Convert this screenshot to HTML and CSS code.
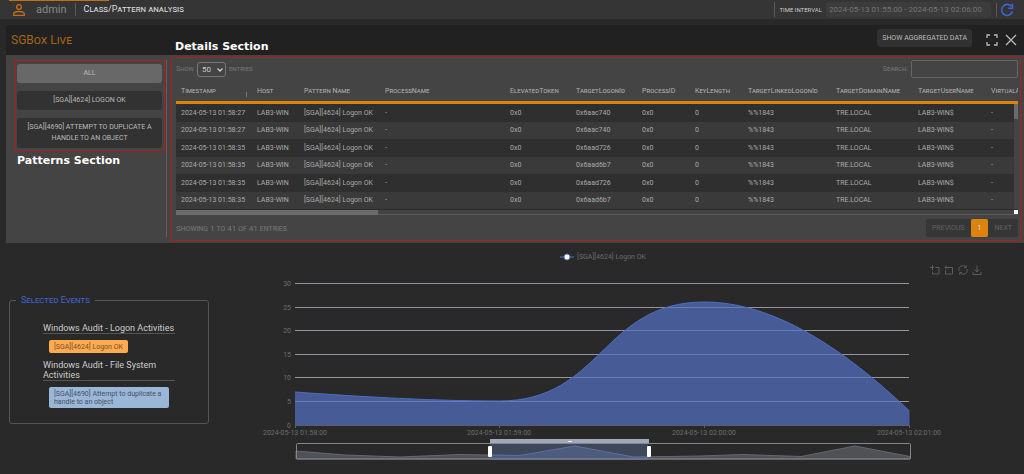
FILE: index.html
```html
<!DOCTYPE html>
<html lang="en">
<head>
    <meta charset="UTF-8">
    <meta name="viewport" content="width=device-width, initial-scale=1.0">
    <title>SGBox Live - Class/Pattern analysis</title>
    <link rel="stylesheet" href="styles.css">
</head>
<body>

    <header class="topbar">
        <svg class="user-icon" viewBox="0 0 12 12" width="12" height="12">
            <circle cx="6" cy="3" r="2.4"/>
            <path d="M.7 11.3V10C.7 8.3 3 7.5 6 7.5s5.300.8 5.300 2.500v1.300z"/>
        </svg>
        <span class="user-name">admin</span>
        <h1 class="page-title">Class/Pattern analysis</h1>
        <div class="interval">
            <label for="interval">Time interval</label>
            <input type="text" id="interval" value="2024-05-13 01:55:00 - 2024-05-13 02:06:00">
        </div>
        <button class="icon-btn refresh" aria-label="Refresh">
            <svg viewBox="0 0 14 14" width="14" height="14"><path d="M11.500 3.500A5.500 5.500 0 1 0 12.500 8.300M12.500.8v4.400H8.200"/></svg>
        </button>
    </header>

    <main>
        <section class="panel">
            <div class="panel-head">
                <h2 class="panel-title">SGBox Live</h2>
                <strong class="note">Details Section</strong>
                <button class="btn aggregated">Show aggregated data</button>
                <button class="icon-btn" aria-label="Fullscreen">
                    <svg viewBox="0 0 12 12" width="12" height="12"><path d="M1 4V1h3M8 1h3v3M11 8v3H8M4 11H1V8"/></svg>
                </button>
                <button class="icon-btn" aria-label="Close">
                    <svg viewBox="0 0 12 12" width="12" height="12"><path d="M1 1l10 10M11 1L1 11"/></svg>
                </button>
            </div>

            <div class="panel-body">
                <aside class="patterns">
                    <div class="pattern-list">
                        <button class="btn active">All</button>
                        <button class="btn">[SGA][4624] Logon OK</button>
                        <button class="btn">[SGA][4690] Attempt to duplicate a handle to an object</button>
                    </div>
                    <strong class="note">Patterns Section</strong>
                </aside>

                <div class="details">
                    <div class="table-tools">
                        <label for="length">Show</label>
                        <div class="select-wrap">
                            <select id="length">
                                <option>50</option>
                                <option>100</option>
                            </select>
                            <svg viewBox="0 0 6 4" width="6" height="4"><path d="M.5.5L3 3l2.500-2.500"/></svg>
                        </div>
                        <span>entries</span>
                        <label class="search-label" for="search">Search:</label>
                        <input type="text" id="search">
                    </div>

                    <div class="table-wrap">
                        <table>
                            <colgroup>
                                <col class="c-time"><col class="c-host"><col class="c-pattern"><col class="c-process">
                                <col class="c-token"><col class="c-token"><col class="c-short"><col class="c-short">
                                <col class="c-linked"><col class="c-domain"><col class="c-user"><col class="c-virtual">
                            </colgroup>
                            <thead>
                                <tr>
                                    <th class="sorted">Timestamp</th><th>Host</th><th>Pattern Name</th><th>ProcessName</th>
                                    <th>ElevatedToken</th><th>TargetLogonId</th><th>ProcessID</th><th>KeyLength</th>
                                    <th>TargetLinkedLogonId</th><th>TargetDomainName</th><th>TargetUserName</th><th>VirtualA</th>
                                </tr>
                            </thead>
                            <tbody>
                                <tr><td>2024-05-13 01:58:27</td><td>LAB3-WIN</td><td>[SGA][4624] Logon OK</td><td>-</td><td>0x0</td><td>0x6aac740</td><td>0x0</td><td>0</td><td>%%1843</td><td>TRE.LOCAL</td><td>LAB3-WIN$</td><td>-</td></tr>
                                <tr><td>2024-05-13 01:58:27</td><td>LAB3-WIN</td><td>[SGA][4624] Logon OK</td><td>-</td><td>0x0</td><td>0x6aac740</td><td>0x0</td><td>0</td><td>%%1843</td><td>TRE.LOCAL</td><td>LAB3-WIN$</td><td>-</td></tr>
                                <tr><td>2024-05-13 01:58:35</td><td>LAB3-WIN</td><td>[SGA][4624] Logon OK</td><td>-</td><td>0x0</td><td>0x6aad726</td><td>0x0</td><td>0</td><td>%%1843</td><td>TRE.LOCAL</td><td>LAB3-WIN$</td><td>-</td></tr>
                                <tr><td>2024-05-13 01:58:35</td><td>LAB3-WIN</td><td>[SGA][4624] Logon OK</td><td>-</td><td>0x0</td><td>0x6aad6b7</td><td>0x0</td><td>0</td><td>%%1843</td><td>TRE.LOCAL</td><td>LAB3-WIN$</td><td>-</td></tr>
                                <tr><td>2024-05-13 01:58:35</td><td>LAB3-WIN</td><td>[SGA][4624] Logon OK</td><td>-</td><td>0x0</td><td>0x6aad726</td><td>0x0</td><td>0</td><td>%%1843</td><td>TRE.LOCAL</td><td>LAB3-WIN$</td><td>-</td></tr>
                                <tr><td>2024-05-13 01:58:35</td><td>LAB3-WIN</td><td>[SGA][4624] Logon OK</td><td>-</td><td>0x0</td><td>0x6aad6b7</td><td>0x0</td><td>0</td><td>%%1843</td><td>TRE.LOCAL</td><td>LAB3-WIN$</td><td>-</td></tr>
                            </tbody>
                        </table>
                        <div class="vscroll"><div class="vthumb"></div></div>
                    </div>
                    <div class="hscroll"><div class="hthumb"></div><div class="corner"></div></div>

                    <div class="table-foot">
                        <span class="info">Showing 1 to 41 of 41 entries</span>
                        <button class="page-btn" disabled>Previous</button>
                        <button class="page-btn current">1</button>
                        <button class="page-btn" disabled>Next</button>
                    </div>
                </div>
            </div>
        </section>

        <section class="bottom">
            <fieldset class="events">
                <legend>Selected Events</legend>
                <h3>Windows Audit - Logon Activities</h3>
                <span class="tag orange">[SGA][4624] Logon OK</span>
                <h3>Windows Audit - File System Activities</h3>
                <span class="tag blue">[SGA][4690] Attempt to duplicate a handle to an object</span>
            </fieldset>

            <div class="chart">
                <div class="chart-legend">
                    <svg viewBox="0 0 14 8" width="14" height="8"><path d="M0 4h14" stroke="#5470c6"/><circle cx="7" cy="4" r="3" fill="#fff" stroke="#5470c6"/></svg>
                    <span>[SGA][4624] Logon OK</span>
                </div>
                <div class="toolbox">
                    <button class="icon-btn" aria-label="Zoom">
                        <svg viewBox="0 0 10 10" width="10" height="10"><path d="M2.500 0v5M0 2.500h4M5.500 2.500H9V9H2.500V6.500"/></svg>
                    </button>
                    <button class="icon-btn" aria-label="Zoom reset">
                        <svg viewBox="0 0 10 10" width="10" height="10"><path d="M1.500 5V9H8.500V2.500H1M3 .5L1 2.500l2 2"/></svg>
                    </button>
                    <button class="icon-btn" aria-label="Restore">
                        <svg viewBox="0 0 10 10" width="10" height="10"><path d="M1 6A4 4 0 0 1 8 2.300M9 4A4 4 0 0 1 2 7.700M8.300.3v2.200H6.200M1.700 9.700V7.500h2.100"/></svg>
                    </button>
                    <button class="icon-btn" aria-label="Save image">
                        <svg viewBox="0 0 10 10" width="10" height="10"><path d="M5 .5v6.500M2.500 4.500L5 7l2.500-2.500M1 7v2.500h8V7"/></svg>
                    </button>
                </div>

                <svg class="plot" viewBox="0 22 758 209">
                    <path class="grid-line" d="M71 40.500H685M71 64.500H685M71 87.500H685M71 111.500H685M71 134.500H685M71 158.500H685"/>
                    <path class="area" d="M71 149C140 154 210 158 275.500 158C378 158 378 59 480.500 59C550 59 620 106 685.500 168V182H71z"/>
                    <path class="line" d="M71 149C140 154 210 158 275.500 158C378 158 378 59 480.500 59C550 59 620 106 685.500 168"/>
                    <path class="axis" d="M71 182.500H686M71.500 182v3M275.500 182v3M480.500 182v3M685.500 182v3"/>
                    <g class="y-labels">
                        <text x="67" y="43">30</text>
                        <text x="67" y="67">25</text>
                        <text x="67" y="90">20</text>
                        <text x="67" y="114">15</text>
                        <text x="67" y="137">10</text>
                        <text x="67" y="161">5</text>
                        <text x="67" y="185">0</text>
                    </g>
                    <g class="x-labels">
                        <text x="71" y="192">2024-05-13 01:58:00</text>
                        <text x="275" y="192">2024-05-13 01:59:00</text>
                        <text x="480" y="192">2024-05-13 02:00:00</text>
                        <text x="685" y="192">2024-05-13 02:01:00</text>
                    </g>

                    <!-- range slider -->
                    <path class="shadow" d="M72 208L121 212L176 214L236 211.500L296 212.500L351 203L409 214L476 213L519 211.500L577 213.500L631 203L686 213.500V216H72z"/>
                    <rect class="range" x="266" y="200" width="158" height="16"/>
                    <rect class="range-bar" x="266" y="196" width="159" height="4"/>
                    <path class="range-grip" d="M344 198.500h4"/>
                    <path class="shadow-sel" d="M266 212L296 212.500L351 203L409 214L424 214V216H266z"/>
                    <rect class="slider-box" x="72.500" y="200.500" width="614" height="15.500" rx="1"/>
                    <rect class="handle" x="264" y="203" width="4" height="11" rx="1"/>
                    <rect class="handle" x="423" y="203" width="4" height="11" rx="1"/>
                </svg>
            </div>
        </section>
    </main>

</body>
</html>
```
FILE: styles.css
```css
* {
    box-sizing: border-box;
}
body {
    margin: 0;
    background-color: #292929;
    color: #aaa;
    font-family: Roboto, sans-serif;
    font-size: 7px;
}
button, input, select {
    font-family: inherit;
    margin: 0;
}
h1, h2, h3 {
    margin: 0;
    font-weight: 400;
}
svg {
    display: block;
}

/* top bar */
.topbar {
    display: flex;
    align-items: center;
    height: 19px;
    padding: 0 10px 0 13px;
    background: linear-gradient(#c27015, #c27015) 9px 0 / 100px 1px no-repeat #353535;
}
.user-icon {
    fill: none;
    stroke: #c27015;
    stroke-width: 1.3;
}
.user-name {
    margin: 0 8px 0 11px;
    font-size: 11px;
    color: #888;
}
.page-title {
    padding-left: 8px;
    border-left: 1px solid #5a5a5a;
    font-size: 9px;
    line-height: 13px;
    font-variant: small-caps;
    color: #ddd;
}
.interval {
    display: flex;
    align-items: center;
    gap: 4px;
    margin-left: auto;
    padding-left: 4px;
    border-left: 1px solid #5a5a5a;
}
.interval label {
    font-size: 6px;
    line-height: 14px;
    text-transform: uppercase;
    color: #ccc;
    white-space: nowrap;
}
.interval input {
    width: 165px;
    height: 15px;
    padding: 0 3px;
    border: none;
    border-radius: 2px;
    background-color: #3c3c3c;
    font-size: 8px;
    color: #757575;
}
.icon-btn {
    padding: 0;
    border: none;
    background: none;
    cursor: pointer;
}
.icon-btn svg {
    fill: none;
    stroke: #bbb;
    stroke-width: 1.3;
}
.refresh {
    margin-left: 5px;
    padding-left: 3px;
    border-left: 1px solid #5a5a5a;
}
.refresh svg {
    stroke: #3f63cf;
    stroke-width: 1.6;
}

/* panel */
.panel {
    margin: 6px 0 0 6px;
    background-color: #444;
}
.panel-head {
    display: flex;
    align-items: center;
    height: 30px;
    padding: 0 7px 0 5px;
    background-color: #212121;
}
.panel-title {
    width: 164px;
    font-size: 12px;
    font-variant: small-caps;
    color: #a5651a;
}
.note {
    font-family: "DejaVu Sans", sans-serif;
    font-size: 11px;
    line-height: 13px;
    color: #fff;
}
.panel-head .note {
    align-self: flex-end;
    margin-bottom: 2px;
}
.btn {
    padding: 5px;
    border: none;
    border-radius: 3px;
    background-color: #313131;
    font-size: 7px;
    line-height: 8px;
    text-transform: uppercase;
    color: #bbb;
    cursor: pointer;
}
.aggregated {
    margin: 0 14px 4px auto;
}
.panel-head .icon-btn + .icon-btn {
    margin-left: 7px;
}
.panel-body {
    display: flex;
    padding: 2px 3px 2px 8px;
}
.patterns {
    width: 153px;
    margin: 3px 4px 4px 0;
    border-right: 1px solid #5f5f5f;
}
.pattern-list {
    display: flex;
    flex-direction: column;
    gap: 8px;
    width: 151px;
    padding: 3px 2px 2px;
    border: 1px solid #b01c1c;
}
.pattern-list .btn {
    line-height: 11px;
    padding: 4px 8px;
    background-color: #323232;
}
.pattern-list .active {
    background-color: #686868;
}
.patterns .note {
    display: block;
    margin: 3px 0 0 3px;
}

/* details */
.details {
    flex: 1;
    min-width: 0;
    padding: 2px 2px 3px 4px;
    border: 1px solid #b01c1c;
}
.table-tools {
    display: flex;
    align-items: center;
    gap: 3px;
    height: 18px;
    font-size: 7px;
    font-variant: small-caps;
    color: #777;
}
.select-wrap {
    position: relative;
}
.select-wrap svg {
    position: absolute;
    top: 6px;
    right: 3px;
    fill: none;
    stroke: #ccc;
    stroke-width: 1.3;
    pointer-events: none;
}
.table-tools select {
    display: block;
    width: 29px;
    height: 15px;
    padding: 0 4px;
    appearance: none;
    border: 1px solid #777;
    border-radius: 3px;
    background-color: #444;
    font-size: 8px;
    color: #ccc;
}
.search-label {
    margin-left: auto;
}
.table-tools input {
    width: 107px;
    height: 18px;
    border: 1px solid #666;
    border-radius: 2px;
    background-color: #444;
    color: #bbb;
}
.table-wrap {
    position: relative;
    overflow: hidden;
    border-bottom: 1px solid #2c2c2c;
}
table {
    width: 100%;
    height: 131px;
    table-layout: fixed;
    border-collapse: separate;
    border-spacing: 0;
}
.c-time { width: 76px; }
.c-host { width: 47px; }
.c-pattern { width: 81px; }
.c-process { width: 125px; }
.c-token { width: 66px; }
.c-short { width: 53px; }
.c-linked { width: 88px; }
.c-domain { width: 82px; }
.c-user { width: 73px; }
th, td {
    padding: 0 0 0 5px;
    text-align: left;
    white-space: nowrap;
    font-weight: 400;
    line-height: 8px;
}
th {
    height: 26px;
    padding-top: 2px;
    border-bottom: 3px solid #dc820f;
    font-size: 7px;
    font-variant: small-caps;
    color: #b0b0b0;
}
.sorted {
    background: linear-gradient(#777, #777) 70px 14px / 1px 5px no-repeat;
}
tbody tr {
    background-color: #3a3a3a;
}
tbody tr:nth-child(odd) {
    background-color: #2f2f2f;
}
.vscroll {
    position: absolute;
    top: 26px;
    right: 0;
    bottom: 0;
    width: 4px;
    background-color: #444;
}
.vthumb {
    height: 15px;
    background-color: #6b6b6b;
}
.hscroll {
    display: flex;
    justify-content: space-between;
    height: 5px;
    border-bottom: 1px solid #5a5a5a;
}
.hthumb {
    width: 24%;
    height: 5px;
    background-color: #6b6b6b;
}
.corner {
    width: 4px;
    background-color: #fff;
}
.table-foot {
    display: flex;
    align-items: center;
    margin-top: 4px;
}
.info {
    margin-right: auto;
    font-size: 8px;
    font-variant: small-caps;
    color: #777;
}
.page-btn {
    height: 18px;
    padding: 0 6px;
    border: none;
    border-radius: 2px;
    background-color: #363636;
    font-size: 7px;
    text-transform: uppercase;
    color: #626262;
}
.page-btn.current {
    padding: 0 7px;
    background-color: #dc820f;
    color: #ddd;
}

/* events and chart */
.bottom {
    display: flex;
    align-items: flex-start;
    padding: 0 42px 0 9px;
}
.events {
    width: 200px;
    height: 130px;
    margin: 51px 15px 0 0;
    padding: 17px 33px 0;
    border: 1px solid #555;
    border-radius: 3px;
}
.events legend {
    margin-left: -27px;
    padding: 0 5px;
    font-size: 9px;
    line-height: 12px;
    font-variant: small-caps;
    color: #4163d0;
}
.events h3 {
    border-bottom: 1px solid #555;
    font-size: 9px;
    line-height: 10px;
    color: #ccc;
}
.tag {
    display: block;
    width: fit-content;
    max-width: 120px;
    margin: 6px 0 7px 6px;
    padding: 3px 5px 2px;
    border-radius: 2px;
    font-size: 7px;
    line-height: 8px;
}
.orange {
    background-color: #ffaa4f;
    color: #75512d;
}
.blue {
    background-color: #9bb7d8;
    color: #435162;
}
.chart {
    position: relative;
    flex: 1;
    min-width: 0;
}
.chart-legend {
    display: flex;
    justify-content: center;
    align-items: center;
    gap: 3px;
    height: 22px;
    padding-top: 6px;
    color: #6c6c6c;
}
.toolbox {
    position: absolute;
    top: 22px;
    right: 0;
    display: flex;
    gap: 4px;
}
.toolbox svg {
    stroke: #5c5c5c;
    stroke-width: 1;
}
.plot {
    width: 100%;
    height: auto;
}
.plot path, .slider-box {
    fill: none;
}
.grid-line {
    stroke: #96949b;
}
.plot .area {
    fill: #5470c6;
    fill-opacity: 0.7;
}
.line {
    stroke: #4f6cc2;
}
.axis {
    stroke: #5e5f66;
}
.plot text {
    font-size: 7px;
    fill: #6c6d73;
}
.y-labels {
    text-anchor: end;
}
.x-labels {
    text-anchor: middle;
}
.plot .shadow {
    fill: #505155;
    stroke: #66686e;
}
.range {
    fill: #455066;
    fill-opacity: 0.8;
}
.range-bar {
    fill: #a3a9b7;
}
.range-grip {
    stroke: #e8eaf0;
}
.plot .shadow-sel {
    fill: #4d5c7c;
    stroke: #5a709f;
}
.slider-box {
    stroke: #83868f;
}
.handle {
    fill: #fff;
}
```
